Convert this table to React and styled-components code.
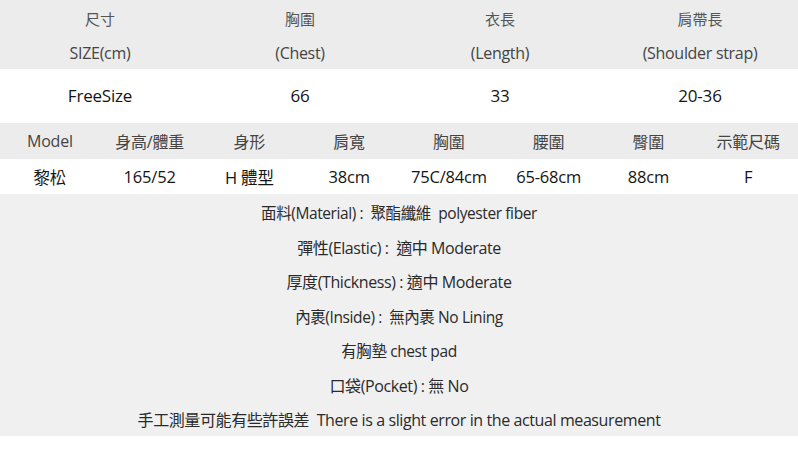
import React from 'react'
import styled, { createGlobalStyle } from 'styled-components'

const Global = createGlobalStyle`
  html, body {
    margin: 0;
    padding: 0;
    background: #ffffff;
  }
  body {
    font-family: "Open Sans", "Noto Sans CJK TC", sans-serif;
  }
`

const Page = styled.div`
  width: 798px;
  height: 472px;
  overflow: hidden;
  background: #ffffff;
  display: flex;
  flex-direction: column;
`

const SizeHead = styled.div`
  background: #ececec;
  display: grid;
  grid-template-columns: repeat(4, 200px);
  grid-template-rows: 36px 33px;
  align-items: center;
  text-align: center;
`

const HeadZh = styled.div`
  font-size: 15px;
  color: #555;
`

const HeadEn = styled.div`
  font-size: 16px;
  color: #444;
  letter-spacing: -0.3px;
`

const ValueRow = styled.div`
  display: grid;
  grid-template-columns: repeat(${p => p.$cols}, ${p => p.$w}px);
  height: ${p => p.$h}px;
  align-items: center;
  text-align: center;
  background: #ffffff;
  color: #151515;
  font-size: ${p => p.$size}px;
  letter-spacing: -0.2px;
`

const Cell = styled.div`
  font-weight: ${p => (p.$zh ? 400 : 500)};
`

const ModelHead = styled.div`
  margin-top: 1px;
  display: grid;
  grid-template-columns: repeat(8, 99.75px);
  height: 36px;
  align-items: center;
  text-align: center;
  background: #ececec;
  color: #444;
  font-size: 16px;
  letter-spacing: -0.2px;
`

const Notes = styled.div`
  background: #f0f0f0;
  height: 242px;
  padding-top: 2px;
  box-sizing: border-box;
  display: flex;
  flex-direction: column;
  align-items: center;
  color: #2a2a2a;
`

const Note = styled.div`
  height: 34.5px;
  line-height: 34.5px;
  font-size: ${p => p.$size}px;
  letter-spacing: -0.4px;
  white-space: pre;
`

const sizeCols = [
  ['尺寸', 'SIZE(cm)', 'FreeSize'],
  ['胸圍', '(Chest)', '66'],
  ['衣長', '(Length)', '33'],
  ['肩帶長', '(Shoulder strap)', '20-36'],
]

const modelHead = ['Model', '身高/體重', '身形', '肩寬', '胸圍', '腰圍', '臀圍', '示範尺碼']
const modelVals = ['黎松', '165/52', 'H 體型', '38cm', '75C/84cm', '65-68cm', '88cm', 'F']

const notes = [
  { t: '面料(Material) :  聚酯纖維  polyester fiber', s: 15.5 },
  { t: '彈性(Elastic) :  適中 Moderate', s: 16 },
  { t: '厚度(Thickness) : 適中 Moderate', s: 16 },
  { t: '內裹(Inside) :  無內裹 No Lining', s: 15.5 },
  { t: '有胸墊 chest pad', s: 15.5 },
  { t: '口袋(Pocket) : 無 No', s: 16 },
  { t: '手工測量可能有些許誤差  There is a slight error in the actual measurement', s: 16 },
]

const hasZh = s => /[\u4e00-\u9fff]/.test(s)

export default function App() {
  return (
    <Page>
      <Global />
      <SizeHead>
        {sizeCols.map(c => <HeadZh key={c[0]}>{c[0]}</HeadZh>)}
        {sizeCols.map(c => <HeadEn key={c[1]}>{c[1]}</HeadEn>)}
      </SizeHead>
      <ValueRow $cols={4} $w={200} $h={53} $size={17}>
        {sizeCols.map(c => <Cell key={c[2]}>{c[2]}</Cell>)}
      </ValueRow>
      <ModelHead>
        {modelHead.map(h => <div key={h}>{h}</div>)}
      </ModelHead>
      <ValueRow $cols={8} $w={99.75} $h={35} $size={16.5}>
        {modelVals.map(v => <Cell key={v} $zh={hasZh(v)}>{v}</Cell>)}
      </ValueRow>
      <Notes>
        {notes.map(n => <Note key={n.t} $size={n.s}>{n.t}</Note>)}
      </Notes>
    </Page>
  )
}
